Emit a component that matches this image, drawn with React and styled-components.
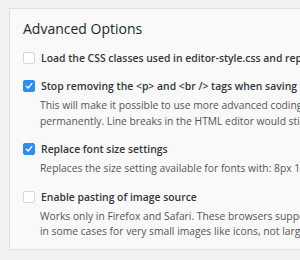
import styled, { createGlobalStyle } from "styled-components";

const GlobalStyle = createGlobalStyle`
  html, body {
    margin: 0;
    background: #f1f1f1;
    overflow: hidden;
  }
  body {
    font-family: "Open Sans", "Liberation Sans", sans-serif;
  }
`;

const options = [
  {
    label: "Load the CSS classes used in editor-style.css and replace the Formats button",
    checked: false,
    desc: [],
  },
  {
    label: "Stop removing the <p> and <br /> tags when saving and show them in the HTML editor",
    checked: true,
    desc: [
      "This will make it possible to use more advanced coding in the HTML editor without the back-end filtering affecting it much.",
      "permanently. Line breaks in the HTML editor would still affect the output, in particular do not use empty lines.",
    ],
  },
  {
    label: "Replace font size settings",
    checked: true,
    desc: ["Replaces the size setting available for fonts with: 8px 10px 12px 14px 16px 20px 24px 28px 32px 36px 48px 60px."],
  },
  {
    label: "Enable pasting of image source",
    checked: false,
    desc: [
      "Works only in Firefox and Safari. These browsers support pasting of images directly in the editor and convert them to",
      "in some cases for very small images like icons, not large images that would bloat the post content.",
    ],
  },
];

export default function App() {
  return (
    <>
      <GlobalStyle />
      <Panel>
        <Title>Advanced Options</Title>
        <List>
          {options.map((o) => (
            <Option key={o.label}>
              <Row>
                <Box checked={o.checked}>
                  {o.checked && (
                    <svg width="8" height="8" viewBox="0 0 8 8">
                      <path d="M1.3 4.2 L3.2 6 L6.8 1.6" fill="none" stroke="#fff" strokeWidth="1.4" strokeLinecap="round" strokeLinejoin="round" />
                    </svg>
                  )}
                </Box>
                <Label>{o.label}</Label>
              </Row>
              {o.desc.length > 0 && (
                <Desc>
                  {o.desc.map((d) => (
                    <div key={d}>{d}</div>
                  ))}
                </Desc>
              )}
            </Option>
          ))}
        </List>
      </Panel>
    </>
  );
}

const Panel = styled.div`
  margin: 8px 0 0 9px;
  width: 600px;
  height: 242px;
  box-sizing: border-box;
  background: #f9f9f9;
  border: 1px solid #e2e2e2;
  padding: 9px 0 0 13px;
  white-space: nowrap;
`;

const Title = styled.h2`
  margin: 0;
  font-size: 14px;
  font-weight: 500;
  color: #23282d;
  line-height: 22px;
`;

const List = styled.div`
  display: flex;
  flex-direction: column;
  gap: 12px;
  margin-top: 10px;
`;

const Option = styled.div`
  display: flex;
  flex-direction: column;
`;

const Row = styled.div`
  display: flex;
  align-items: center;
  gap: 6px;
  height: 16px;
`;

const Box = styled.span`
  width: 12px;
  height: 12px;
  box-sizing: border-box;
  border-radius: 2px;
  display: flex;
  align-items: center;
  justify-content: center;
  background: ${(p) => (p.checked ? "#2f8cf5" : "#fff")};
  border: 1px solid ${(p) => (p.checked ? "#2f8cf5" : "#d6d6d6")};
`;

const Label = styled.span`
  font-size: 10.4px;
  font-weight: 600;
  color: #32373c;
`;

const Desc = styled.div`
  margin: 4px 0 0 17px;
  font-size: 10.3px;
  line-height: 15.5px;
  color: #555;
`;
